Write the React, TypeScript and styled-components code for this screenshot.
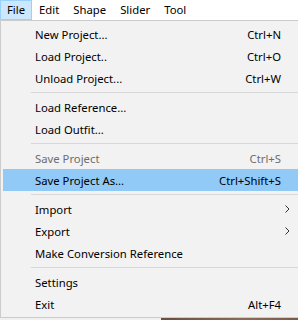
import React from "react";
import styled, { createGlobalStyle } from "styled-components";

type Entry =
  | { kind: "item"; label: string; shortcut?: string; disabled?: boolean; active?: boolean; submenu?: boolean }
  | { kind: "sep" };

const entries: Entry[] = [
  { kind: "item", label: "New Project...", shortcut: "Ctrl+N" },
  { kind: "item", label: "Load Project..", shortcut: "Ctrl+O" },
  { kind: "item", label: "Unload Project...", shortcut: "Ctrl+W" },
  { kind: "sep" },
  { kind: "item", label: "Load Reference..." },
  { kind: "item", label: "Load Outfit..." },
  { kind: "sep" },
  { kind: "item", label: "Save Project", shortcut: "Ctrl+S", disabled: true },
  { kind: "item", label: "Save Project As...", shortcut: "Ctrl+Shift+S", active: true },
  { kind: "sep" },
  { kind: "item", label: "Import", submenu: true },
  { kind: "item", label: "Export", submenu: true },
  { kind: "item", label: "Make Conversion Reference" },
  { kind: "sep" },
  { kind: "item", label: "Settings" },
  { kind: "item", label: "Exit", shortcut: "Alt+F4" },
];

const menus = ["File", "Edit", "Shape", "Slider", "Tool"];

const App = () => {
  return (
    <>
      <GlobalStyle />
      <Window>
        <MenuBar>
          {menus.map((m, i) => (
            <MenuTitle key={m} open={i === 0}>
              {m}
            </MenuTitle>
          ))}
        </MenuBar>
        <Dropdown>
          {entries.map((e, i) =>
            e.kind === "sep" ? (
              <Separator key={i} />
            ) : (
              <Item key={i} active={e.active} disabled={e.disabled}>
                <Label>{e.label}</Label>
                <Shortcut>{e.shortcut}</Shortcut>
                <Arrow>
                  {e.submenu && (
                    <svg width="5" height="8" viewBox="0 0 5 8">
                      <path d="M0.5 0.5 L4 4 L0.5 7.5" fill="none" stroke="#333" strokeWidth="1" />
                    </svg>
                  )}
                </Arrow>
              </Item>
            )
          )}
        </Dropdown>
        <Backdrop>
          <Photo />
        </Backdrop>
      </Window>
    </>
  );
};

export default App;

const GlobalStyle = createGlobalStyle`
  body {
    margin: 0;
    background: #f0f0f0;
    font-family: "Noto Sans", "Open Sans", sans-serif;
    font-size: 11.3px;
  }
`;

const Window = styled.div`
  width: 298px;
  height: 320px;
  overflow: hidden;
  display: flex;
  flex-direction: column;
`;

const MenuBar = styled.div`
  height: 20px;
  background: #ffffff;
  display: flex;
  align-items: stretch;
  flex-shrink: 0;
`;

const MenuTitle = styled.div<{ open?: boolean }>`
  box-sizing: border-box;
  padding: 0 6px;
  line-height: 18px;
  color: #000;
  border: 1px solid ${(p) => (p.open ? "#99d1ff" : "transparent")};
  background: ${(p) => (p.open ? "#cce8ff" : "transparent")};
`;

const Dropdown = styled.div`
  box-sizing: border-box;
  width: 310px;
  background: #f2f2f2;
  border: 1px solid #cccccc;
  padding: 2px;
  flex-shrink: 0;
`;

const Item = styled.div<{ active?: boolean; disabled?: boolean }>`
  height: 22px;
  display: grid;
  grid-template-columns: 1fr auto 26px;
  align-items: center;
  padding-left: 32px;
  color: ${(p) => (p.disabled ? "#6d6d6d" : "#000")};
  background: ${(p) => (p.active ? "#91c9f7" : "transparent")};
`;

const Label = styled.span`
  white-space: nowrap;
`;

const Shortcut = styled.span`
  white-space: nowrap;
`;

const Arrow = styled.span`
  display: flex;
  align-items: center;
  padding-left: 4px;
`;

const Separator = styled.div`
  height: 7px;
  margin-left: 28px;
  display: flex;
  align-items: center;
  &::before {
    content: "";
    flex: 1;
    height: 1px;
    background: #d7d7d7;
  }
`;

const Backdrop = styled.div`
  flex: 1;
  display: flex;
  justify-content: flex-end;
  background: #f0f0f0;
`;

const Photo = styled.div`
  width: 137px;
  background: linear-gradient(90deg, #6a4e3e, #8a6a58 60%, #7a5a48);
`;
